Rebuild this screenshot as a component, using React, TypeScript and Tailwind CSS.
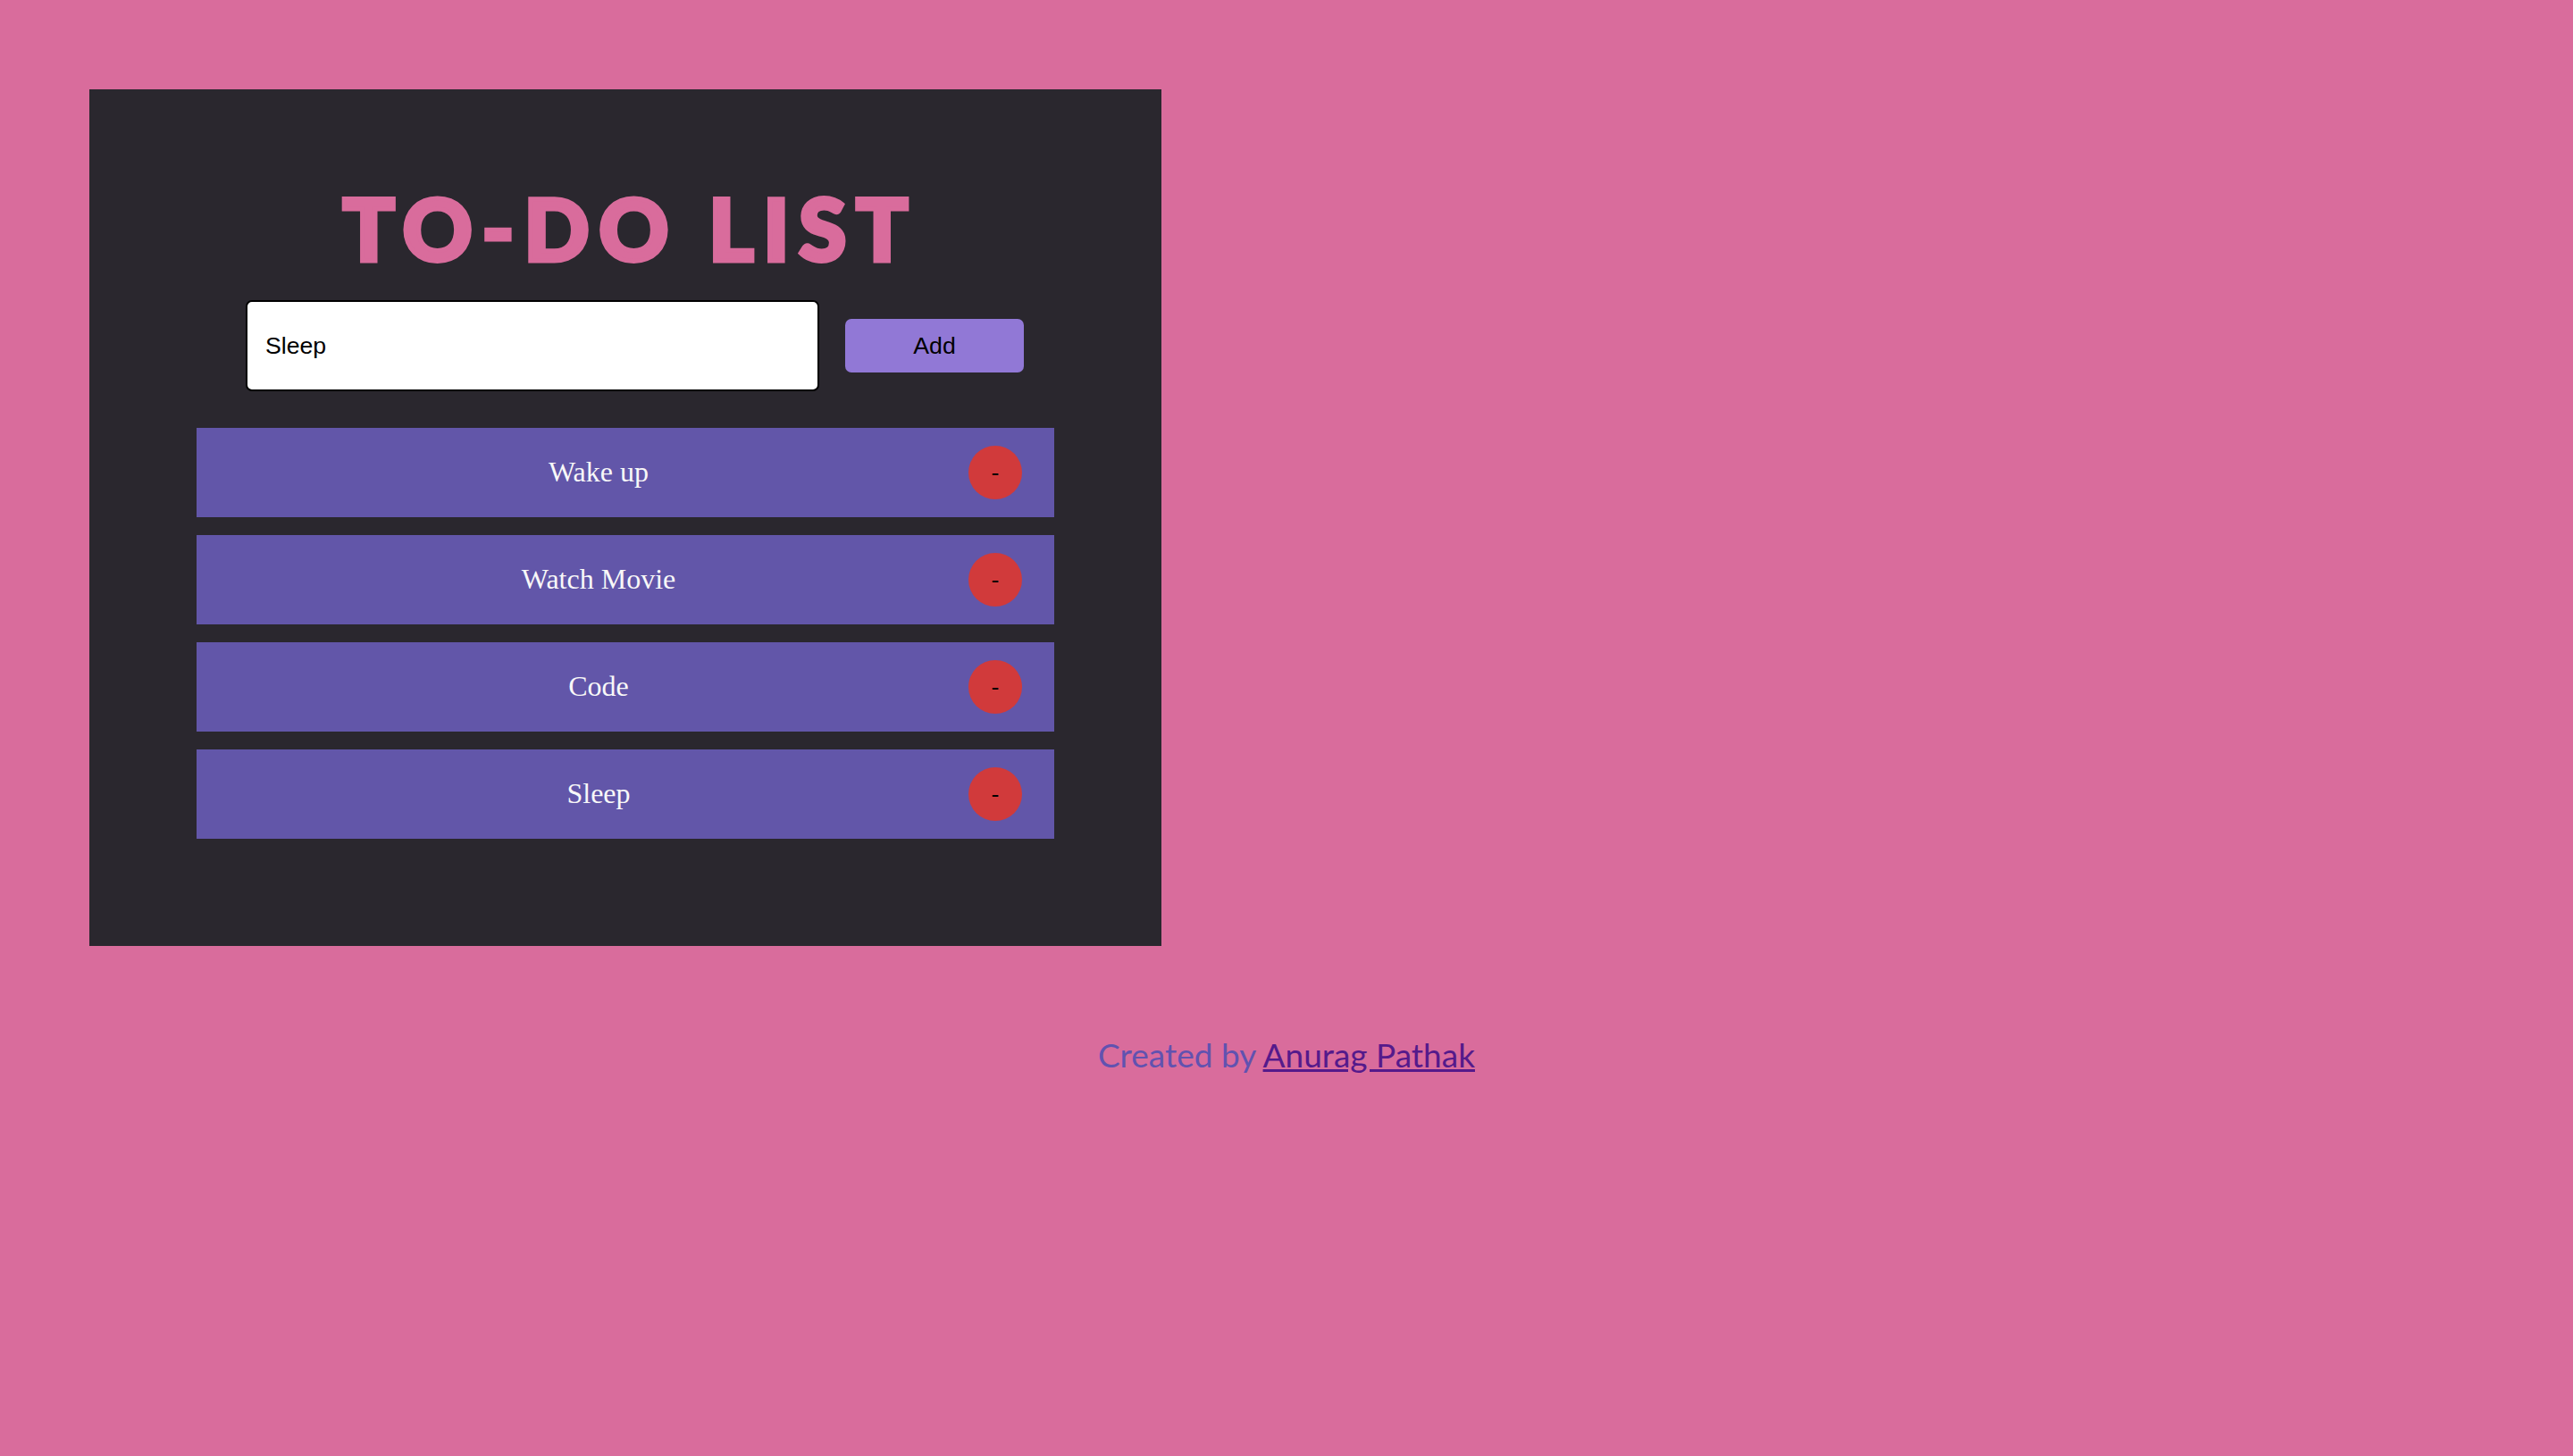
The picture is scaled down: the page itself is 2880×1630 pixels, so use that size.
import React from "react";

const items = ["Wake up", "Watch Movie", "Code", "Sleep"];

export default function App() {
  return (
    <div className="min-h-[1630px] w-full bg-[#d96c9c] pt-[100px]">
      <div className="ml-[100px] flex h-[959px] w-[1200px] flex-col items-center bg-[#2a272e]">
        <h1 className="mt-[107px] pl-[11px] text-[96px] leading-none font-black tracking-[11px] text-[#d96c9c] [font-family:Lato,'DejaVu_Sans',sans-serif] [-webkit-text-stroke:5px_#d96c9c]">
          TO-DO LIST
        </h1>
        <div className="mt-[33px] ml-[175px] flex items-center gap-[29px] self-start">
          <input
            defaultValue="Sleep"
            className="h-[102px] w-[642px] rounded-[7px] border-2 border-black bg-white pl-[20px] text-[26.67px] text-black outline-none [font-family:'Liberation_Sans',Arial,sans-serif]"
          />
          <button className="h-[60px] w-[200px] rounded-[7px] bg-[#9178d6] text-[26.67px] text-black [font-family:'Liberation_Sans',Arial,sans-serif]">
            Add
          </button>
        </div>
        <ul className="mt-[41px] flex w-[960px] flex-col gap-[20px]">
          {items.map((t) => (
            <li
              key={t}
              className="flex h-[100px] items-center bg-[#6256a9] pr-[36px]"
            >
              <span className="flex-1 pl-[36px] pb-[3px] text-center text-[32px] text-[#f8f8f8] [font-family:'Liberation_Serif','Times_New_Roman',serif]">
                {t}
              </span>
              <button className="flex h-[60px] w-[60px] items-center justify-center rounded-full bg-[#d13a3b] text-[26.67px] text-black [font-family:'Liberation_Sans',Arial,sans-serif]">
                -
              </button>
            </li>
          ))}
        </ul>
      </div>
      <p className="mt-[94px] text-center text-[37px] text-[#6152b0] [font-family:Lato,sans-serif]">
        Created by{" "}
        <a href="#" className="text-[#551a8b] underline">
          Anurag Pathak
        </a>
      </p>
    </div>
  );
}
